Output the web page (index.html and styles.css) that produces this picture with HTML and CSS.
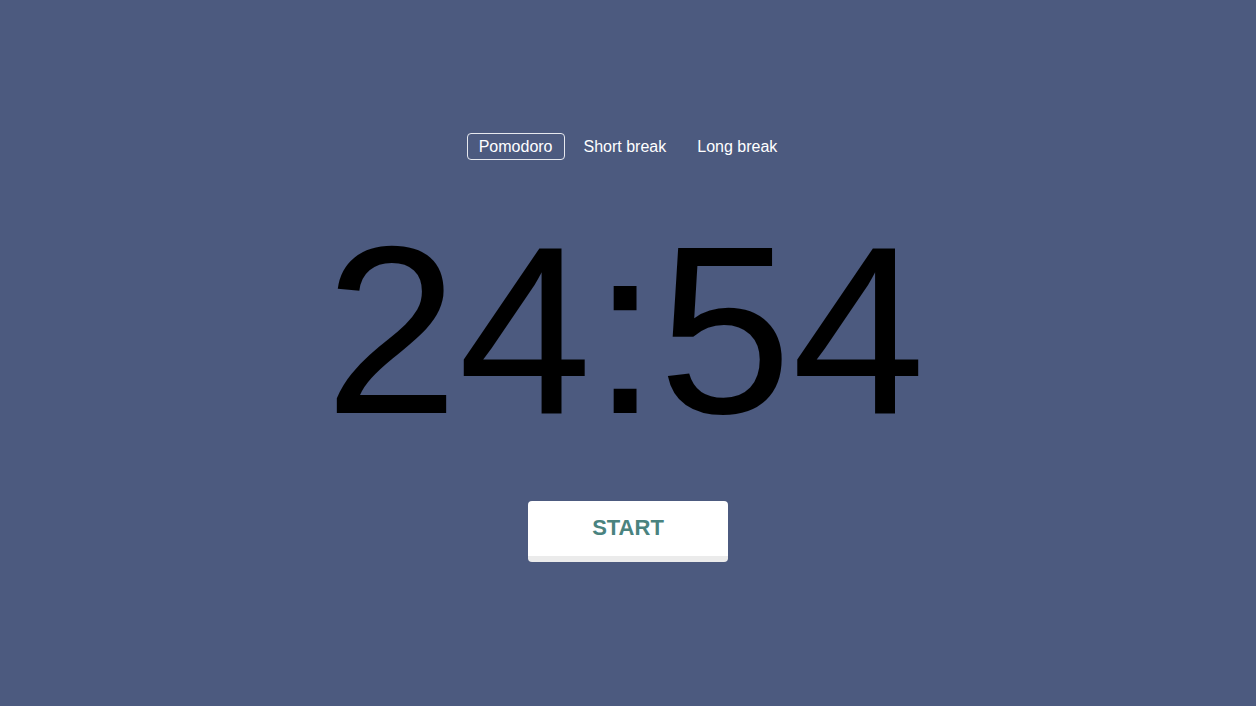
FILE: index.html
```html
<!DOCTYPE html>
<html lang="en">
<head>
<meta charset="utf-8">
<title>Pomodoro</title>
<link rel="stylesheet" href="styles.css">
</head>
<body>
<main class="app">
  <nav class="modes">
    <button class="mode active">Pomodoro</button>
    <button class="mode">Short break</button>
    <button class="mode">Long break</button>
  </nav>
  <div class="clock">24:54</div>
  <button class="start">START</button>
</main>
</body>
</html>
```

FILE: styles.css
```css
html, body {
  margin: 0;
  padding: 0;
  height: 100%;
}
body {
  background: #4c5a7f;
  font-family: "Liberation Sans", Arial, sans-serif;
}
.app {
  display: flex;
  flex-direction: column;
  align-items: center;
  padding-top: 133px;
}
.modes {
  display: flex;
  gap: 7px;
}
.mode {
  font-family: "Liberation Sans", Arial, sans-serif;
  font-size: 16px;
  line-height: 18px;
  color: #fff;
  background: transparent;
  border: 1px solid transparent;
  border-radius: 4px;
  padding: 4px 11px 3px;
  height: 27px;
  cursor: pointer;
}
.mode.active {
  border-color: #e6e8ee;
}
.clock {
  margin-top: 50px;
  margin-right: 6px;
  font-size: 240px;
  line-height: 240px;
  color: #000;
}
.start {
  margin-top: 51px;
  width: 200px;
  height: 61px;
  background: #fff;
  border: none;
  border-bottom: 6px solid #ebebeb;
  border-radius: 4px;
  font-family: "Liberation Sans", Arial, sans-serif;
  font-weight: bold;
  font-size: 22px;
  color: #4a837f;
  padding: 0 0 2px;
  cursor: pointer;
}
```
